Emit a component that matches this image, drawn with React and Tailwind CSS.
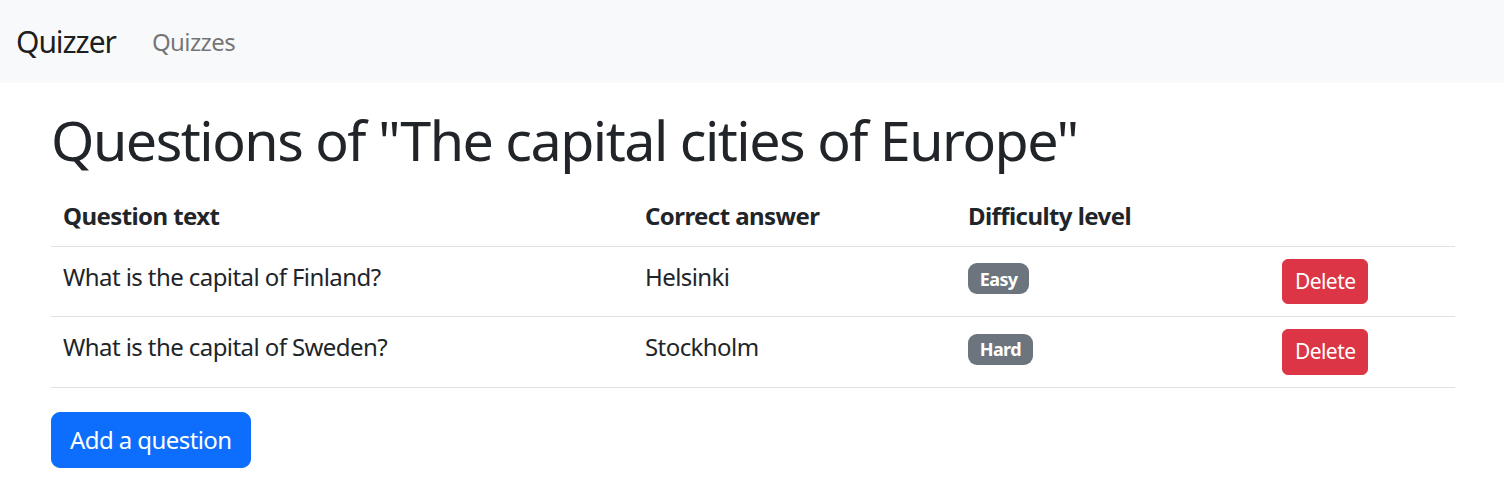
const questions = [
  { id: 1, text: "What is the capital of Finland?", answer: "Helsinki", level: "Easy" },
  { id: 2, text: "What is the capital of Sweden?", answer: "Stockholm", level: "Hard" },
];

export default function App() {
  return (
    <div className="min-h-screen bg-white text-[#212529] text-[24px] leading-[36px] tracking-[-0.024em] font-['Noto_Sans',sans-serif]">
      {/* Navbar */}
      <nav className="bg-[#f8f9fa] h-[83px] px-[16px] flex items-center">
        <a href="#" className="text-[30px] leading-[45px] tracking-[-0.035em] text-black/90 mr-[24px]">
          Quizzer
        </a>
        <a href="#" className="px-[12px] text-[24px] text-black/55">
          Quizzes
        </a>
      </nav>

      <main className="w-[1404px] ml-[51px] pt-[24px]">
        <h1 className="text-[55.6px] leading-[66.7px] tracking-[-0.027em] mb-[12px]">
          Questions of "The capital cities of Europe"
        </h1>

        <table className="w-full mb-[24px] border-collapse text-left">
          <thead>
            <tr className="border-b border-[#dee2e6]">
              <th className="w-[582px] p-[12px] font-bold">Question text</th>
              <th className="w-[323px] p-[12px] font-bold">Correct answer</th>
              <th className="w-[314px] p-[12px] font-bold">Difficulty level</th>
              <th className="p-[12px]"></th>
            </tr>
          </thead>
          <tbody>
            {questions.map((q) => (
              <tr key={q.id} className="border-b border-[#dee2e6]">
                <td className="p-[12px] align-top">{q.text}</td>
                <td className="p-[12px] align-top">{q.answer}</td>
                <td className="p-[12px] align-top">
                  <span className="inline-block bg-[#6c757d] text-white text-[18px] leading-[18px] font-bold px-[11.7px] py-[6.3px] rounded-[9px] align-baseline">
                    {q.level}
                  </span>
                </td>
                <td className="p-[12px] align-top">
                  <button className="bg-[#dc3545] text-white text-[21px] leading-[31.5px] px-[12px] py-[6px] border border-[#dc3545] rounded-[6px]">
                    Delete
                  </button>
                </td>
              </tr>
            ))}
          </tbody>
        </table>

        <button className="bg-[#0d6efd] text-white text-[24px] leading-[36px] px-[18px] py-[9px] border border-[#0d6efd] rounded-[9px]">
          Add a question
        </button>
      </main>
    </div>
  );
}
